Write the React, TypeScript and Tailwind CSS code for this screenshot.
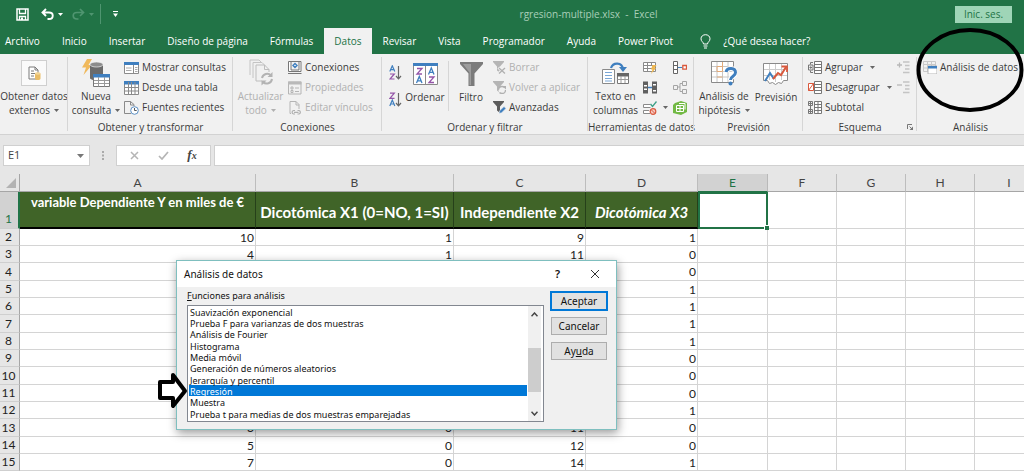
import type { ReactNode } from 'react';

const GREY = '#7a7a7a';
const BLUE = '#3f7fbf';

type SvgProps = { w: number; h: number; children: ReactNode };
const Svg = ({ w, h, children }: SvgProps) => (
  <svg width={w} height={h} viewBox={`0 0 ${w} ${h}`} fill="none" className="shrink-0" aria-hidden="true">
    {children}
  </svg>
);

const Caret = ({ color = '#666' }: { color?: string }) => (
  <Svg w={5} h={3}>
    <path d="M0 0h5L2.500 3z" fill={color} />
  </Svg>
);

/* ---------- Quick access icons ---------- */
const SaveIcon = () => (
  <Svg w={13} h={13}>
    <path d="M1 1h11v11H1z" stroke="#fff" strokeWidth="1.500" />
    <path d="M3.500 1v4.500h6V1M3.500 12V8.500h6V12" stroke="#fff" strokeWidth="1.300" />
    <path d="M5 9.500h2V12H5z" fill="#fff" />
  </Svg>
);
const UndoIcon = () => (
  <Svg w={13} h={12}>
    <path d="M5 1L1.500 4.500 5 8M1.500 4.500H8c5 0 5 6.500 0 6.500H6.500" stroke="#fff" strokeWidth="1.900" />
  </Svg>
);
const RedoIcon = () => (
  <Svg w={13} h={12}>
    <path d="M8 1l3.500 3.500L8 8M11.500 4.500H5c-5 0-5 6.500 0 6.500h1.500" stroke="#4f9570" strokeWidth="1.700" />
  </Svg>
);
const BulbIcon = () => (
  <Svg w={11} h={15}>
    <path d="M3.500 10C3.500 8 1 7.500 1 4.800 1 2.300 3 .7 5.500.7S10 2.300 10 4.800C10 7.500 7.500 8 7.500 10z" stroke="#fff" />
    <path d="M3.500 12h4M4 14h3" stroke="#fff" />
  </Svg>
);

/* ---------- Large ribbon icons ---------- */
const ExternalIcon = () => (
  <Svg w={15} h={15}>
    <path d="M2 1h6l3 3v9H2z" fill="#fff" stroke={GREY} />
    <path d="M8 1v3h3M4 5h3M4 7.500h4M4 10h3" stroke={GREY} />
    <path d="M8 7.500v5c0 2 5.500 2 5.500 0v-5z" fill="#e9bd68" />
    <ellipse cx="10.750" cy="7.500" rx="2.750" ry="1.300" fill="#f3d596" />
  </Svg>
);
const NewQueryIcon = () => (
  <Svg w={28} h={29}>
    <path d="M5 0h5L6.500 6H10L1.500 16 4 8.500H0z" fill="#f0b95c" />
    <path d="M8 6v13c0 3 13 3 13 0V6z" fill="#6b6b6b" />
    <ellipse cx="14.500" cy="5.500" rx="6.500" ry="2.500" fill="#8b8b8b" stroke="#f1f1f1" strokeWidth=".7" />
    <path d="M11.500 15.500h16v12h-16z" fill="#fff" stroke="#777" />
    <path d="M11 15h17v3.500H11z" fill={BLUE} />
    <path d="M16.500 18v9.500M22.500 18v9.500M12 21.500h15M12 24.500h15" stroke="#999" />
  </Svg>
);
const RefreshAllIcon = () => (
  <Svg w={24} h={28}>
    <path d="M1 16V1h9l3 3" stroke="#c4c4c4" />
    <path d="M4 19V3.500h9l3 3" stroke="#c4c4c4" />
    <path d="M7 22V6h8.500l4.500 4.500V13M7 22h6M15.500 6v4.500H20" stroke="#bdbdbd" />
    <path d="M13 19a5.300 5.300 0 0 1 9-2.500M23 20a5.300 5.300 0 0 1-9 3" stroke="#b3b3b3" strokeWidth="2" />
    <path d="M23.500 13v5h-5zM12.500 26.500v-5h5z" fill="#b3b3b3" />
  </Svg>
);
const SortIcon = () => (
  <Svg w={25} h={22}>
    <path d="M.5.5h24v21H.5zM12.500 1v20" fill="#fff" stroke="#8a8a8a" />
    <path d="M0 0h25v3H0z" fill={BLUE} />
    <path d="M4 5.500h5L4 11h5M16 14h5l-5 5.500h5" stroke="#9455a8" strokeWidth="1.300" />
    <path d="M3.500 20L6.300 13.500 9 20M4.500 17.800h3.600M15.500 11.500L18.300 5 21 11.500M16.500 9.300h3.600" stroke={BLUE} strokeWidth="1.300" />
  </Svg>
);
const FilterIcon = () => (
  <Svg w={23} h={24}>
    <path d="M0 0h23v2l-8.500 9.500V24h-6V11.500L0 2z" fill="#7b7b7b" />
    <path d="M3 2h8v21H9.500V10.500z" fill="#9d9d9d" />
  </Svg>
);
const TextColumnsIcon = () => (
  <Svg w={28} h={23}>
    <path d="M.5 7.500h12v14H.5z" fill="#fff" stroke="#8a8a8a" />
    <path d="M3 10.500h7M3 13.500h7M3 16.500h7M3 19h7" stroke="#7aa7d6" />
    <path d="M15.500 11.500h11v10h-11z" fill="#fff" stroke="#777" />
    <path d="M15 11h12v3.500H15z" fill="#666" />
    <path d="M19 14v7M23 14v7M15.500 17.500h11" stroke="#999" />
    <path d="M9 6c2-6 11-6 12 1" stroke={BLUE} strokeWidth="2.200" />
    <path d="M17 5h8l-4 5z" fill={BLUE} />
  </Svg>
);
const WhatIfIcon = () => (
  <Svg w={26} h={26}>
    <path d="M.5 1.500h22v21H.5z" fill="#fff" stroke="#8a8a8a" />
    <path d="M6 2v20M11.500 2v20M17 2v20M1 6.500h21M1 11.500h21M1 17h21" stroke="#c6c6c6" />
    <path d="M6 6.500h5.500v5H6zM6 17h5.500M11.500 2v4.500M17 6.500h5" stroke="#e3aa78" />
    <path d="M15 12c1-5 9.500-4.500 9.500.5 0 4-5 3.500-5 7.500" stroke="#fff" strokeWidth="5" />
    <path d="M15 12c1-5 9.500-4.500 9.500.5 0 4-5 3.500-5 7.500" stroke={BLUE} strokeWidth="3" />
    <circle cx="19.500" cy="23.500" r="2" fill={BLUE} />
  </Svg>
);
const ForecastIcon = () => (
  <Svg w={26} h={24}>
    <path d="M.5 1.500h24v17h-4l-2 3-3-1-3 2-3-2-3 1-2-3h-4z" fill="#fff" stroke="#8a8a8a" />
    <path d="M6.500 2v16M12.500 2v18M18.500 2v16M1 7.500h23M1 13.500h23" stroke="#ccc" />
    <path d="M2 19l5-8 4 6" stroke={BLUE} strokeWidth="2" />
    <path d="M10 17l5-6 3 2 5-8" stroke="#d9593d" strokeWidth="2" />
    <path d="M18.500 4.500H24V10" stroke="#d9593d" strokeWidth="1.800" />
  </Svg>
);

/* ---------- Small ribbon icons ---------- */
const ShowQueriesIcon = () => (
  <Svg w={15} h={14}>
    <path d="M.5 1.500h14v11H.5z" fill="#fff" stroke="#8a8a8a" />
    <path d="M0 1h15v3H0z" fill={BLUE} />
    <path d="M9.500 4v8.500" stroke="#8a8a8a" />
    <path d="M2 7h5.500M2 9.500h5.500M11 6.500h2.500M11 8.500h2.500M11 10.500h2.500" stroke="#aaa" />
  </Svg>
);
const TableIcon = () => (
  <Svg w={15} h={14}>
    <path d="M.5.5h14v13H.5z" fill="#fff" stroke="#8a8a8a" />
    <path d="M0 0h15v3.500H0z" fill={BLUE} />
    <path d="M4.500 1v12.500M7.500 1v12.500M11 1v12.500M1 6.500h13M1 10h13" stroke="#8a8a8a" />
  </Svg>
);
const RecentIcon = () => (
  <Svg w={15} h={14}>
    <path d="M7 12.500H.5V.5h6l3.500 3V5M6.500.5V4H10" stroke="#8a8a8a" />
    <circle cx="10.500" cy="9.500" r="3.800" fill="#fff" stroke="#5b8fc4" />
    <path d="M10.500 7v2.500h2.200" stroke="#555" />
  </Svg>
);
const ConnectionsIcon = () => (
  <Svg w={14} h={13}>
    <path d="M3 .5H.5v10H13V.5h-2.500M3 .5h8V9H3z" stroke="#777" fill="#fff" />
    <path d="M7 2.500l2 2-2 2-2-2z" stroke={BLUE} strokeWidth="1.400" />
    <path d="M0 12.500h13.500" stroke="#777" />
  </Svg>
);
const PropertiesIcon = () => (
  <Svg w={14} h={14}>
    <path d="M.5 1h12.500v12H.5z" stroke="#b5b5b5" />
    <path d="M0 .5h13.500v3H0z" fill="#b9b9b9" />
    <path d="M3 6h2v2H3zM3 9.500h2v2H3zM7 7h4M7 10.500h4" stroke="#b5b5b5" />
  </Svg>
);
const EditLinksIcon = () => (
  <Svg w={14} h={14}>
    <path d="M2 12.500V.5h6l3 3V8M2 12.500h1M8 .5V4h3" stroke="#b5b5b5" />
    <path d="M7 9.500H5.500a1.800 1.800 0 0 0 0 3.500H7M9.500 9.500H11a1.800 1.800 0 0 1 0 3.500H9.500M6 11.300h4.500" stroke="#b0b0b0" strokeWidth="1.200" />
  </Svg>
);
const SortSmall = ({ desc = false }: { desc?: boolean }) => (
  <Svg w={13} h={15}>
    <path d={desc ? 'M.8 14L3.300 8 5.800 14M1.700 12h3.200' : 'M.8 6.500L3.300.8 5.800 6.500M1.700 4.700h3.200'} stroke={BLUE} strokeWidth="1.200" />
    <path d={desc ? 'M1 1.200h4.300L1 6.300h4.500' : 'M1 9h4.300L1 14h4.500'} stroke="#9455a8" strokeWidth="1.200" />
    <path d="M9.500 1v12.500M7 11l2.500 2.800L12 11" stroke="#666" strokeWidth="1.200" />
  </Svg>
);
const funnel = 'M0 0h11v1L7 5.500V12L4 9.500v-4L0 1z';
const ClearIcon = () => (
  <Svg w={13} h={13}>
    <path d={funnel} fill="#b5b5b5" />
    <path d="M5.500 6.500L12 12.500M12 6.500L5.500 12.500" stroke="#f1f1f1" strokeWidth="3" />
    <path d="M6 7l6 5.500M12 7l-6 5.500" stroke="#b0b0b0" strokeWidth="1.300" />
  </Svg>
);
const ReapplyIcon = () => (
  <Svg w={13} h={13}>
    <path d={funnel} fill="#b5b5b5" />
    <circle cx="9" cy="9" r="3.500" fill="#f1f1f1" stroke="#b0b0b0" strokeWidth="1.300" strokeDasharray="8 3" />
    <path d="M9.500 5H13v3.500z" fill="#b0b0b0" />
  </Svg>
);
const AdvancedIcon = () => (
  <Svg w={13} h={13}>
    <path d={funnel} fill="#5c5c5c" />
    <path d="M6 12.500l.8-3L11 5.500l2 2-4.300 4.200z" fill={BLUE} stroke="#f1f1f1" strokeWidth=".6" />
  </Svg>
);
const FlashFillIcon = () => (
  <Svg w={14} h={13}>
    <path d="M.5 1.500h12v9H.5z" fill="#fff" stroke="#8a8a8a" />
    <path d="M.5 4.500h12M.5 7.500h12M4.500 1.500v9M8.500 1.500v3" stroke="#8a8a8a" />
    <path d="M9.500 4h4l-2 3H13l-5 6 1.500-4.500H8z" fill="#efb74f" />
  </Svg>
);
const DuplicatesIcon = () => (
  <Svg w={14} h={13}>
    <path d="M0 .5h5v12H0zM9 .5h5v12H9z" fill="#606060" />
    <path d="M1 4h3v1.500H1zM1 7.500h3V9H1zM10 3h3v1.500h-3zM10 9h3v1.500h-3z" fill="#fff" />
    <path d="M5 6.500h4" stroke={BLUE} strokeWidth="1.500" />
  </Svg>
);
const ValidationIcon = () => (
  <Svg w={14} h={14}>
    <path d="M7 3.500H.5v3h7M6 9.500H.5v3H7" fill="#fff" stroke="#8a8a8a" />
    <path d="M7.500 3l2 2.500L13.500.5" stroke="#3c9f86" strokeWidth="1.300" />
    <circle cx="10" cy="10.500" r="2.800" fill="#f7c9c0" stroke="#d9593d" strokeWidth="1.200" />
    <path d="M8 8.500l4 4" stroke="#d9593d" />
  </Svg>
);
const ConsolidateIcon = () => (
  <Svg w={14} h={13}>
    <path d="M.5.5h4v12h-4zM.5 4.500h4M.5 8.500h4" fill="#fff" stroke="#666" />
    <path d="M5 6.500h4" stroke={BLUE} />
    <path d="M9.800 4.500h3.700v3.700H9.800z" fill="#fff" stroke="#d9593d" strokeWidth="1.300" />
  </Svg>
);
const RelationsIcon = () => (
  <Svg w={14} h={13}>
    <path d="M.5 4.500h4v4h-4zM9.500.5h4v4h-4zM9.500 8.500h4v4h-4zM4.500 6h2.500V2.500h2.500M7 6v4.500h2.500" stroke="#a5a5a5" />
  </Svg>
);
const DataModelIcon = () => (
  <Svg w={14} h={14}>
    <path d="M2 2l6-2 6 2v9l-6 3-8-2V4z" fill="#72b944" />
    <path d="M3.500 4.500h7v6h-7zM3.500 7.500h7M7 4.500v6M6 2.500h6v6" stroke="#fff" />
  </Svg>
);
const OutlineIcon = ({ kind }: { kind: 'group' | 'ungroup' | 'subtotal' }) => (
  <Svg w={14} h={13}>
    <path d="M6.500.5h7v12h-7zM6.500 3.500h7M6.500 6.500h7M6.500 9.500h7" fill="#fff" stroke="#777" />
    {kind === 'group' && <path d="M5 1.500H2.500v2M5 11.500H2.500v-2M.5 4h4.500v5H.5zM1.500 6.500H4M2.700 5.300v2.500" stroke="#777" />}
    {kind === 'ungroup' && <path d="M.5 2.500h5v7h-5zM.5 9.500l5-7" fill="#fff" stroke="#d9593d" />}
    {kind === 'subtotal' && <path d="M10 .5v12M.5.5h4v4h-4zM.5 8.500h4v4h-4zM1 2.500h3M2.500 1v3M1 10.500h3M2.500 9v3M2.500 4.500v4" stroke="#777" />}
  </Svg>
);
const DetailIcon = ({ plus = false }: { plus?: boolean }) => (
  <Svg w={13} h={13}>
    <path d="M6 1h6.500M8 4.500h4.500M8 8h4.500M6 11.500h6.500" stroke="#c4c4c4" strokeWidth="1.500" />
    <path d={plus ? 'M0 4h5M2.500 1.500v5' : 'M0 4h5'} stroke="#b8b8b8" strokeWidth="1.300" />
  </Svg>
);
const AnalysisIcon = () => (
  <Svg w={14} h={13}>
    <path d="M.5.500h12v10H.5zM4.500.5v10M8.500.5v10M.5 3.500h12M.5 7h12" stroke="#c9c9c9" />
    <path d="M5 5h9v8H5z" fill="#fff" stroke="#b5b5b5" />
    <path d="M5 5h9v2.500H5z" fill={BLUE} />
  </Svg>
);

/* ---------- Ribbon building blocks ---------- */
type GroupProps = { label: string; size: string; children: ReactNode; launcher?: boolean; last?: boolean };
const Group = ({ label, size, children, launcher, last }: GroupProps) => (
  <section aria-label={label || 'Datos externos'} className={`relative flex shrink-0 flex-col ${size}`}>
    <div className="flex h-[60px]">{children}</div>
    <h2 className="mt-[3px] h-[14px] text-center leading-[14px]">{label}</h2>
    {launcher && (
      <button aria-label={`Opciones de ${label}`} className="absolute right-1 bottom-1">
        <Svg w={6} h={6}>
          <path d="M.5 5V.5H5M2.500 2.500L5 5" stroke="#777" />
          <path d="M6 2.500V6H2.500z" fill="#777" />
        </Svg>
      </button>
    )}
    {!last && <div className="absolute top-0 right-0 h-[74px] w-px bg-[#d6d6d6]" />}
  </section>
);

type LargeProps = { icon: ReactNode; lines: string[]; caret?: boolean; disabled?: boolean; size: string };
const Large = ({ icon, lines, caret, disabled, size }: LargeProps) => (
  <button disabled={disabled} className={`flex shrink-0 flex-col items-center disabled:text-[#b0b0b0] ${size}`}>
    <span className="flex h-[33px] items-center">{icon}</span>
    {lines.map((line, i) => (
      <span key={line} className="flex items-center gap-1 leading-[14px]">
        {line}
        {caret && i === lines.length - 1 && <Caret color={disabled ? '#b0b0b0' : '#666'} />}
      </span>
    ))}
  </button>
);

type SmallProps = { icon: ReactNode; text: string; disabled?: boolean; caret?: boolean };
const Small = ({ icon, text, disabled, caret }: SmallProps) => (
  <button disabled={disabled} className="flex h-5 items-center gap-[3px] pt-px disabled:text-[#b0b0b0]">
    {icon}
    <span>{text}</span>
    {caret && <span className="pl-1"><Caret /></span>}
  </button>
);

const IconButton = ({ label, children }: { label: string; children: ReactNode }) => (
  <button aria-label={label} className="flex h-5 items-center pt-px">{children}</button>
);

const Ribbon = () => (
  <div className="flex border-b border-[#d2d2d2] bg-[#f1f1f1] pt-[3px] text-[10px] whitespace-nowrap text-[#3b3b3b]">
    <Group label="" size="w-[68px]">
      <Large
        size="w-full"
        caret
        icon={<span className="flex size-[26px] items-center justify-center border border-[#cfcfcf] bg-[#fafafa]"><ExternalIcon /></span>}
        lines={['Obtener datos', 'externos']}
      />
    </Group>
    <Group label="Obtener y transformar" size="w-[165px]">
      <Large size="w-[56px]" caret icon={<NewQueryIcon />} lines={['Nueva', 'consulta']} />
      <div>
        <Small icon={<ShowQueriesIcon />} text="Mostrar consultas" />
        <Small icon={<TableIcon />} text="Desde una tabla" />
        <Small icon={<RecentIcon />} text="Fuentes recientes" />
      </div>
    </Group>
    <Group label="Conexiones" size="w-[149px]">
      <Large size="w-[55px]" caret disabled icon={<RefreshAllIcon />} lines={['Actualizar', 'todo']} />
      <div>
        <Small icon={<ConnectionsIcon />} text="Conexiones" />
        <Small icon={<PropertiesIcon />} text="Propiedades" disabled />
        <Small icon={<EditLinksIcon />} text="Editar vínculos" disabled />
      </div>
    </Group>
    <Group label="Ordenar y filtrar" size="w-[206px]">
      <div className="flex flex-col gap-3 pt-2 pl-[7px]">
        <button aria-label="Ordenar de A a Z"><SortSmall /></button>
        <button aria-label="Ordenar de Z a A"><SortSmall desc /></button>
      </div>
      <Large size="w-[46px]" icon={<SortIcon />} lines={['Ordenar']} />
      <div className="mt-1 h-[50px] w-px bg-[#d6d6d6]" />
      <Large size="w-[44px]" icon={<FilterIcon />} lines={['Filtro']} />
      <div>
        <Small icon={<ClearIcon />} text="Borrar" disabled />
        <Small icon={<ReapplyIcon />} text="Volver a aplicar" disabled />
        <Small icon={<AdvancedIcon />} text="Avanzadas" />
      </div>
    </Group>
    <Group label="Herramientas de datos" size="w-[106px]">
      <Large size="w-[55px]" icon={<TextColumnsIcon />} lines={['Texto en', 'columnas']} />
      <div>
        <IconButton label="Relleno rápido"><FlashFillIcon /></IconButton>
        <IconButton label="Quitar duplicados"><DuplicatesIcon /></IconButton>
        <div className="flex items-center gap-[6px]">
          <IconButton label="Validación de datos"><ValidationIcon /></IconButton>
          <Caret />
        </div>
      </div>
      <div className="pl-[5px]">
        <IconButton label="Consolidar"><ConsolidateIcon /></IconButton>
        <IconButton label="Relaciones"><RelationsIcon /></IconButton>
        <IconButton label="Modelo de datos"><DataModelIcon /></IconButton>
      </div>
    </Group>
    <Group label="Previsión" size="w-[109px]">
      <Large size="w-[60px]" caret icon={<WhatIfIcon />} lines={['Análisis de', 'hipótesis']} />
      <Large size="w-[44px]" icon={<ForecastIcon />} lines={['Previsión']} />
    </Group>
    <Group label="Esquema" size="w-[114px]" launcher>
      <div className="flex-1 pl-[5px]">
        <Small icon={<OutlineIcon kind="group" />} text="Agrupar" caret />
        <Small icon={<OutlineIcon kind="ungroup" />} text="Desagrupar" caret />
        <Small icon={<OutlineIcon kind="subtotal" />} text="Subtotal" />
      </div>
      <div className="pr-[7px]">
        <IconButton label="Mostrar detalle"><DetailIcon plus /></IconButton>
        <IconButton label="Ocultar detalle"><DetailIcon /></IconButton>
      </div>
    </Group>
    <Group label="Análisis" size="w-[107px]" last>
      <div className="pl-[6px]">
        <Small icon={<AnalysisIcon />} text="Análisis de datos" />
      </div>
      <svg
        width="108"
        height="84"
        viewBox="0 0 108 84"
        fill="none"
        className="pointer-events-none absolute -top-[29px] right-0"
        aria-hidden="true"
      >
        <ellipse cx="54" cy="42" rx="51.500" ry="40" stroke="#000" strokeWidth="4" />
      </svg>
    </Group>
  </div>
);

/* ---------- Title bar and tabs ---------- */
const tabs = ['Archivo', 'Inicio', 'Insertar', 'Diseño de página', 'Fórmulas', 'Datos', 'Revisar', 'Vista', 'Programador', 'Ayuda', 'Power Pivot'];

const Header = () => (
  <header className="bg-[#217346] text-[10px] text-white">
    <div className="flex h-7 items-center pr-3 pl-4">
      <div className="flex flex-1 items-center">
        <button aria-label="Guardar"><SaveIcon /></button>
        <button aria-label="Deshacer" className="ml-3 flex items-center gap-1"><UndoIcon /><Caret color="#fff" /></button>
        <button aria-label="Rehacer" disabled className="ml-[9px] flex items-center gap-1"><RedoIcon /><Caret color="#4f9570" /></button>
        <div className="ml-[6px] h-5 w-px bg-[#4f9570]" />
        <button aria-label="Personalizar barra" className="ml-3">
          <Svg w={5} h={6}>
            <path d="M0 .5h5" stroke="#fff" />
            <path d="M0 2.500h5L2.500 6z" fill="#fff" />
          </Svg>
        </button>
      </div>
      <h1 className="pl-[149px] leading-[14px] whitespace-pre text-[#a9cfb9]">rgresion-multiple.xlsx  -  Excel</h1>
      <div className="flex flex-1 justify-end">
        <button className="h-[17px] w-[57px] bg-[#9fd5b7] leading-[17px] text-[#217346]">Inic. ses.</button>
      </div>
    </div>
    <nav className="flex h-[26px] items-center whitespace-nowrap">
      {tabs.map((tab) => (
        <a
          key={tab}
          href="#"
          className={`flex h-full items-center first:pl-[5px] ${tab === 'Datos' ? 'bg-[#f1f1f1] px-[10px] text-[#217346]' : 'px-[11px]'}`}
        >
          {tab}
        </a>
      ))}
      <a href="#" className="flex items-center gap-3 pl-4">
        <BulbIcon />
        ¿Qué desea hacer?
      </a>
    </nav>
  </header>
);

const FormulaBar = () => (
  <div className="flex h-[31px] items-end text-[11px] text-[#444]">
    <div className="ml-[3px] flex h-[21px] w-[87px] items-center justify-between border border-[#d0d0d0] bg-white pr-[5px]">
      <input aria-label="Cuadro de nombres" defaultValue="E1" className="w-12 bg-transparent pl-1 outline-none" />
      <Svg w={7} h={4}><path d="M0 0h7L3.500 4z" fill="#777" /></Svg>
    </div>
    <div className="flex h-[21px] w-[26px] items-center justify-center">
      <Svg w={2} h={9}><path d="M0 0h2v2H0zM0 3.500h2v2H0zM0 7h2v2H0z" fill="#aaa" /></Svg>
    </div>
    <div className="flex h-[21px] w-[95px] items-center justify-around border border-[#d0d0d0] bg-white px-1">
      <button aria-label="Cancelar entrada"><Svg w={9} h={9}><path d="M1 1l7 7M8 1L1 8" stroke="#b5b5b5" strokeWidth="1.500" /></Svg></button>
      <button aria-label="Introducir"><Svg w={11} h={9}><path d="M1 5l3 3 6-7" stroke="#b5b5b5" strokeWidth="1.700" /></Svg></button>
      <button className="font-['Liberation_Serif',serif] text-[13px] leading-4 font-bold italic">
        f<span className="text-[10px]">x</span>
      </button>
    </div>
    <input aria-label="Barra de fórmulas" className="ml-[3px] h-[21px] min-w-0 flex-1 border border-r-0 border-[#d0d0d0] bg-white px-1 outline-none" />
  </div>
);

/* ---------- Worksheet ---------- */
const letters = ['A', 'B', 'C', 'D', 'E', 'F', 'G', 'H', 'I'];
const columnWidths = ['w-[20px]', 'w-[236px]', 'w-[198px]', 'w-[132px]', 'w-[112px]', 'w-[70px]', 'w-[69px]', 'w-[69px]', 'w-[69px]', 'w-[69px]'];
const rows: [string, string, string, string][] = [
  ['10', '1', '9', '1'],
  ['4', '1', '11', '0'],
  ['', '', '', '0'],
  ['', '', '', '1'],
  ['', '', '', '1'],
  ['', '', '', '1'],
  ['', '', '', '1'],
  ['', '', '', '0'],
  ['', '', '', '0'],
  ['', '', '', '0'],
  ['', '', '', '1'],
  ['3', '0', '11', '0'],
  ['5', '0', '12', '0'],
  ['7', '0', '14', '1'],
];

const rowHead = 'border-r border-b border-r-[#a6a6a6] border-b-[#cfcfcf] bg-[#e6e6e6] p-0 pr-[2px] font-normal';
const greenHead = 'border-r border-b-2 border-black border-r-[#26401a] bg-[#406428] p-0 font-bold text-white';

const Sheet = () => (
  <table className="w-full min-w-[1044px] table-fixed border-separate border-spacing-0 bg-white font-['Lato',sans-serif] text-[12px] leading-[14px] text-[#222]">
    <colgroup>
      {columnWidths.map((w, i) => <col key={i} className={w} />)}
    </colgroup>
    <thead>
      <tr className="h-[18px] bg-[#e6e6e6]">
        <th className="border-r border-b border-[#a6a6a6] p-0">
          <span className="flex justify-end pr-[3px]">
            <Svg w={10} h={10}><path d="M10 0v10H0z" fill="#b3b3b3" /></Svg>
          </span>
        </th>
        {letters.map((l) => (
          <th
            key={l}
            scope="col"
            className={`border-r border-b p-0 font-normal ${l === 'E' ? 'border-r-[#b9b9b9] border-b-[#217346] bg-[#d2d2d2] text-[#217346]' : 'border-r-[#bdbdbd] border-b-[#a6a6a6] text-[#444]'}`}
          >
            {l}
          </th>
        ))}
      </tr>
    </thead>
    <tbody>
      <tr className="h-[37px]">
        <th scope="row" className="border-r-2 border-b border-r-[#217346] border-b-[#cfcfcf] bg-[#d2d2d2] p-0 pr-px pb-[2px] align-bottom font-normal text-[#217346]">1</th>
        <td className={`${greenHead} pt-[3px] text-center align-top text-[13px]`}>variable Dependiente Y en miles de €</td>
        <td className={`${greenHead} pt-1 text-center text-[15px]`}>Dicotómica X1 (0=NO, 1=SI)</td>
        <td className={`${greenHead} pt-1 text-center text-[15px]`}>Independiente X2</td>
        <td className={`${greenHead} pt-1 text-center text-[15px] italic`}>Dicotómica X3</td>
        <td className="relative border-2 border-[#217346] p-0">
          <span className="absolute -right-[3px] -bottom-[3px] size-[5px] border-t border-l border-white bg-[#217346]" />
        </td>
        {['F', 'G', 'H', 'I'].map((c) => <td key={c} className="border-r border-b border-[#d4d4d4] p-0" />)}
      </tr>
      {rows.map((row, i) => (
        <tr key={i} className={i % 3 === 2 ? 'h-[18px]' : 'h-[17px]'}>
          <th scope="row" className={rowHead}>{i + 2}</th>
          {letters.map((l, c) => (
            <td key={l} className="border-r border-b border-[#d4d4d4] p-0 pt-px pr-px text-right">{row[c]}</td>
          ))}
        </tr>
      ))}
    </tbody>
  </table>
);

/* ---------- Dialog ---------- */
const functions = [
  'Suavización exponencial',
  'Prueba F para varianzas de dos muestras',
  'Análisis de Fourier',
  'Histograma',
  'Media móvil',
  'Generación de números aleatorios',
  'Jerarquía y percentil',
  'Regresión',
  'Muestra',
  'Prueba t para medias de dos muestras emparejadas',
];

const dialogButton = 'h-[18px] w-full border bg-[#e1e1e1] leading-4';

const AnalysisDialog = () => (
  <div
    role="dialog"
    aria-labelledby="dialog-title"
    className="absolute top-[260px] left-[176px] w-[441px] border border-[#7fbfbf] bg-[#f0f0f0] font-['Noto_Sans',sans-serif] text-[9px] text-[#111] shadow-[1px_3px_9px_rgba(0,0,0,0.4)]"
  >
    <div className="flex h-[26px] items-center bg-white pr-4 pl-[7px]">
      <h2 id="dialog-title" className="flex-1 text-[10px]">Análisis de datos</h2>
      <button aria-label="Ayuda del cuadro" className="mr-[30px] text-[11px] font-semibold">?</button>
      <button aria-label="Cerrar"><Svg w={10} h={10}><path d="M1 1l8 8M9 1L1 9" stroke="#333" /></Svg></button>
    </div>
    <div className="flex gap-[7px] px-[9px] pb-[7px]">
      <div className="min-w-0 flex-1 pl-px">
        <label htmlFor="functions" className="block pb-px leading-[17px]">
          <span className="underline">F</span>unciones para análisis
        </label>
        <div className="flex h-[117px] border border-[#828790] bg-white">
          <select
            id="functions"
            size={10}
            defaultValue="Regresión"
            className="h-full min-w-0 flex-1 appearance-none overflow-hidden bg-white px-px outline-none"
          >
            {functions.map((name) => (
              <option
                key={name}
                value={name}
                className="h-[11px] min-h-0 overflow-visible p-0 pl-px leading-[12px] checked:bg-[#0078d7] checked:bg-[linear-gradient(#0078d7,#0078d7)] checked:text-white nth-[3n]:h-[12px]"
              >
                {name}
              </option>
            ))}
          </select>
          <div className="mr-[2px] flex w-[13px] flex-col items-center bg-[#f0f0f0]" aria-hidden="true">
            <span className="flex h-[42px] items-start pt-[6px]"><Svg w={7} h={5}><path d="M.5 4.200L3.500 1l3 3.200" stroke="#444" strokeWidth="1.500" /></Svg></span>
            <span className="h-[44px] w-full bg-[#cdcdcd]" />
            <span className="flex flex-1 items-end pb-[5px]"><Svg w={7} h={5}><path d="M.5.8L3.500 4l3-3.200" stroke="#444" strokeWidth="1.500" /></Svg></span>
          </div>
        </div>
      </div>
      <div className="flex w-[56px] flex-col gap-[7px] pt-[5px] text-[10px]">
        <button className={`${dialogButton} border-[#0078d7] outline outline-[#0078d7]`}>Aceptar</button>
        <button className={`${dialogButton} border-[#adadad]`}>Cancelar</button>
        <button className={`${dialogButton} border-[#adadad]`}>Ay<span className="underline">u</span>da</button>
      </div>
    </div>
  </div>
);

const Pointer = () => (
  <svg width="30" height="40" viewBox="0 0 30 40" className="pointer-events-none absolute top-[371px] left-[158px]" aria-hidden="true">
    <path d="M2 11h13V4l12 16-12 15v-8H2z" fill="#fff" stroke="#000" strokeWidth="4" strokeLinejoin="round" />
  </svg>
);

export default function App() {
  return (
    <main className="relative overflow-hidden bg-[#e6e6e6] font-['Open_Sans','Noto_Sans',sans-serif]">
      <Header />
      <Ribbon />
      <FormulaBar />
      <div className="overflow-hidden pt-2">
        <Sheet />
      </div>
      <AnalysisDialog />
      <Pointer />
    </main>
  );
}
